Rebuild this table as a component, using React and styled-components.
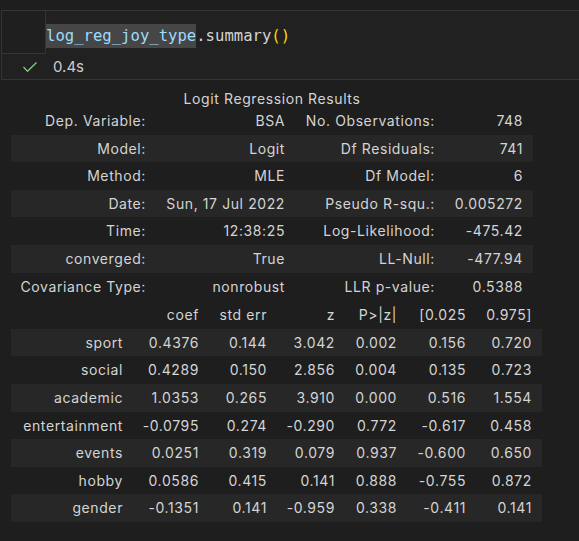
import React from 'react';
import styled, { createGlobalStyle } from 'styled-components';

const GlobalStyle = createGlobalStyle`
    html, body {
        margin: 0;
        padding: 0;
        background: #1e1e1e;
        overflow: hidden;
    }
    body {
        font-family: Inter, "Liberation Sans", sans-serif;
    }
`;

const Page = styled.div`
    width: 579px;
    height: 541px;
    padding-top: 10px;
    box-sizing: border-box;
    background: #1e1e1e;
    overflow: hidden;
`;

const Cell = styled.div`
    margin-left: 1px;
    width: 620px;
    border: 1px solid #353535;
    background: #212121;
    box-sizing: border-box;
`;

const InputRow = styled.div`
    display: flex;
    align-items: center;
    height: 43px;
`;

const Gutter = styled.div`
    width: 44px;
    height: 43px;
    flex-shrink: 0;
    box-sizing: border-box;
    border-right: 1px solid #353535;
    border-bottom: 1px solid #353535;
    background: #1f1f1f;
`;

const Code = styled.div`
    font-family: "DejaVu Sans Mono", "Liberation Mono", monospace;
    font-size: 15.6px;
    color: #d4d4d4;
    padding-top: 7px;
`;

const Ident = styled.span`
    display: inline-block;
    color: #9cdcfe;
    background: #464646;
    line-height: 24px;
`;

const Paren = styled.span`
    color: #ffd700;
`;

const StatusRow = styled.div`
    display: flex;
    align-items: center;
    height: 25px;
    padding-left: 21px;
    gap: 16px;
    font-size: 15px;
    color: #cccccc;
`;

const Output = styled.div`
    padding-left: 11px;
    padding-top: 8px;
`;

const Table = styled.table`
    border-collapse: collapse;
    border-spacing: 0;
    width: ${p => p.$width}px;
    margin-top: ${p => p.$gap || 0}px;
    font-size: 14px;
    letter-spacing: 0.6px;
    color: #d4d4d4;
    table-layout: fixed;
`;

const Caption = styled.caption`
    text-align: center;
    height: 19px;
    line-height: 22px;
`;

const Row = styled.tr`
    background: ${p => (p.$stripe ? '#272727' : 'transparent')};
    height: 27.6px;
`;

const Cellv = styled.td`
    text-align: right;
    padding: 0 10px 0 0;
    white-space: nowrap;
    line-height: 27.6px;
`;

const Head = styled.th`
    text-align: right;
    font-weight: normal;
    padding: 0 10px 0 0;
    white-space: nowrap;
    line-height: 27.6px;
`;

const info = [
    ['Dep. Variable:', 'BSA', 'No. Observations:', '748'],
    ['Model:', 'Logit', 'Df Residuals:', '741'],
    ['Method:', 'MLE', 'Df Model:', '6'],
    ['Date:', 'Sun, 17 Jul 2022', 'Pseudo R-squ.:', '0.005272'],
    ['Time:', '12:38:25', 'Log-Likelihood:', '-475.42'],
    ['converged:', 'True', 'LL-Null:', '-477.94'],
    ['Covariance Type:', 'nonrobust', 'LLR p-value:', '0.5388'],
];

const coefs = [
    ['sport', '0.4376', '0.144', '3.042', '0.002', '0.156', '0.720'],
    ['social', '0.4289', '0.150', '2.856', '0.004', '0.135', '0.723'],
    ['academic', '1.0353', '0.265', '3.910', '0.000', '0.516', '1.554'],
    ['entertainment', '-0.0795', '0.274', '-0.290', '0.772', '-0.617', '0.458'],
    ['events', '0.0251', '0.319', '0.079', '0.937', '-0.600', '0.650'],
    ['hobby', '0.0586', '0.415', '0.141', '0.888', '-0.755', '0.872'],
    ['gender', '-0.1351', '0.141', '-0.959', '0.338', '-0.411', '0.141'],
];

const Check = () => (
    <svg width="14" height="10" viewBox="0 0 14 10">
        <path d="M0.5 5 L4.5 9.3 L13.5 0.5" fill="none" stroke="#89d185" strokeWidth="1.2" />
    </svg>
);

const App = () => {
    return (
        <Page>
            <GlobalStyle />
            <Cell>
                <InputRow>
                    <Gutter />
                    <Code>
                        <Ident>log_reg_joy_type</Ident>.summary<Paren>()</Paren>
                    </Code>
                </InputRow>
                <StatusRow>
                    <Check />
                    <span>0.4s</span>
                </StatusRow>
            </Cell>
            <Output>
                <Table $width={522}>
                    <Caption>Logit Regression Results</Caption>
                    <colgroup>
                        <col style={{ width: 145 }} />
                        <col style={{ width: 139 }} />
                        <col style={{ width: 150 }} />
                        <col style={{ width: 88 }} />
                    </colgroup>
                    <tbody>
                        {info.map((r, i) => (
                            <Row key={r[0]} $stripe={i % 2 === 1}>
                                {r.map((c, j) => <Cellv key={j}>{c}</Cellv>)}
                            </Row>
                        ))}
                    </tbody>
                </Table>
                <Table $width={531} $gap={1}>
                    <colgroup>
                        <col style={{ width: 122 }} />
                        <col style={{ width: 76 }} />
                        <col style={{ width: 68 }} />
                        <col style={{ width: 68 }} />
                        <col style={{ width: 62 }} />
                        <col style={{ width: 69 }} />
                        <col style={{ width: 66 }} />
                    </colgroup>
                    <thead>
                        <Row>
                            <Head />
                            <Head>coef</Head>
                            <Head>std err</Head>
                            <Head>z</Head>
                            <Head>P&gt;|z|</Head>
                            <Head>[0.025</Head>
                            <Head>0.975]</Head>
                        </Row>
                    </thead>
                    <tbody>
                        {coefs.map((r, i) => (
                            <Row key={r[0]} $stripe={i % 2 === 0}>
                                {r.map((c, j) => <Cellv key={j}>{c}</Cellv>)}
                            </Row>
                        ))}
                    </tbody>
                </Table>
            </Output>
        </Page>
    );
};

export default App;
